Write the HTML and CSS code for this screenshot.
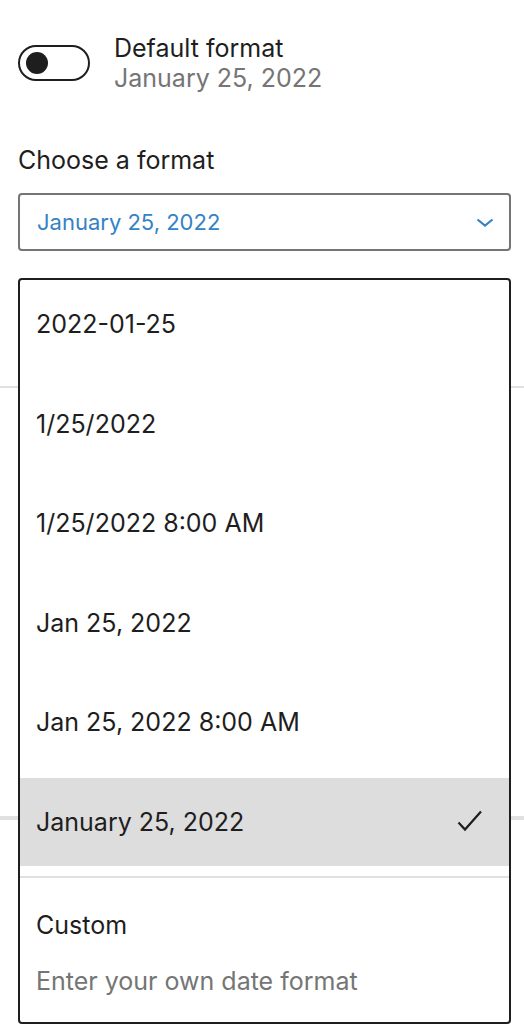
FILE: index.html
```html
<!DOCTYPE html>
<html lang="en">
<head>
  <meta charset="UTF-8">
  <title>Date format</title>
  <link rel="stylesheet" href="styles.css">
</head>
<body>
  <div class="sidebar">
    <div class="section first">
      <div class="toggle-row">
        <span class="toggle"><span class="knob"></span></span>
        <div class="toggle-text">
          <div class="toggle-label">Default format</div>
          <div class="toggle-help">January 25, 2022</div>
        </div>
      </div>

      <div class="field">
        <div class="field-label">Choose a format</div>
        <div class="select">
          <span>January 25, 2022</span>
          <svg class="chevron" width="24" height="24" viewBox="0 0 24 24"><path d="M4.5 9.5l7.5 6 7.5-6" fill="none" stroke="currentColor" stroke-width="2.2"/></svg>
        </div>
      </div>
    </div>
    <div class="section middle"></div>
    <div class="section"></div>

    <div class="dropdown">
      <ul class="options">
        <li class="option">2022-01-25</li>
        <li class="option">1/25/2022</li>
        <li class="option">1/25/2022 8:00 AM</li>
        <li class="option">Jan 25, 2022</li>
        <li class="option">Jan 25, 2022 8:00 AM</li>
        <li class="option selected">
          <span>January 25, 2022</span>
          <svg class="check" width="30" height="30" viewBox="0 0 30 30"><path d="M3.5 15.5l6.5 7L26 4.5" fill="none" stroke="currentColor" stroke-width="2.2"/></svg>
        </li>
      </ul>
      <div class="custom">
        <div class="custom-label">Custom</div>
        <div class="custom-input">Enter your own date format</div>
      </div>
    </div>
  </div>
</body>
</html>
```

FILE: styles.css
```css
body {
  margin: 0;
  background: #fff;
  font-family: Inter, "Noto Sans", sans-serif;
  color: #1e1e1e;
}

.sidebar {
  position: relative;
  height: 1024px;
  overflow: hidden;
}

.section {
  padding: 0 13px 0 18px;
  border-bottom: 2px solid #e0e0e0;
}

.section.first {
  height: 388px;
  box-sizing: border-box;
  padding-top: 33px;
}

.section.middle {
  height: 428px;
}

.toggle-row {
  display: flex;
  gap: 24px;
}

.toggle {
  width: 72px;
  height: 36px;
  box-sizing: border-box;
  border: 2px solid #1e1e1e;
  border-radius: 18px;
  margin-top: 12px;
  display: flex;
  align-items: center;
  padding-left: 6px;
}

.knob {
  width: 22px;
  height: 22px;
  border-radius: 50%;
  background: #1e1e1e;
}

.toggle-label {
  font-size: 25px;
  line-height: 30px;
}

.toggle-help {
  font-size: 25px;
  line-height: 30px;
  color: #757575;
}

.field {
  margin-top: 52px;
}

.field-label {
  font-size: 25px;
  line-height: 30px;
  margin-bottom: 18px;
}

.select {
  height: 58px;
  box-sizing: border-box;
  border: 2px solid #757575;
  border-radius: 4px;
  display: flex;
  align-items: center;
  justify-content: space-between;
  padding: 0 12px 0 17px;
  font-size: 22px;
  color: #3582c4;
}

.chevron {
  color: #3582c4;
}

.dropdown {
  position: absolute;
  top: 278px;
  left: 18px;
  width: 493px;
  height: 746px;
  box-sizing: border-box;
  background: #fff;
  border: 2px solid #1e1e1e;
  border-radius: 4px;
}

.options {
  list-style: none;
  margin: 0;
  padding: 0;
  display: flex;
  flex-direction: column;
  gap: 11.6px;
}

.option {
  height: 88px;
  display: flex;
  align-items: center;
  justify-content: space-between;
  padding: 0 24px 0 16px;
  font-size: 25px;
}

.option.selected {
  background: #dddddd;
}

.custom {
  margin-top: 10px;
  border-top: 2px solid #e0e0e0;
  padding: 32px 16px 0;
}

.custom-label {
  font-size: 25px;
  line-height: 30px;
}

.custom-input {
  margin-top: 26px;
  font-size: 25px;
  line-height: 30px;
  color: #757575;
}
```
